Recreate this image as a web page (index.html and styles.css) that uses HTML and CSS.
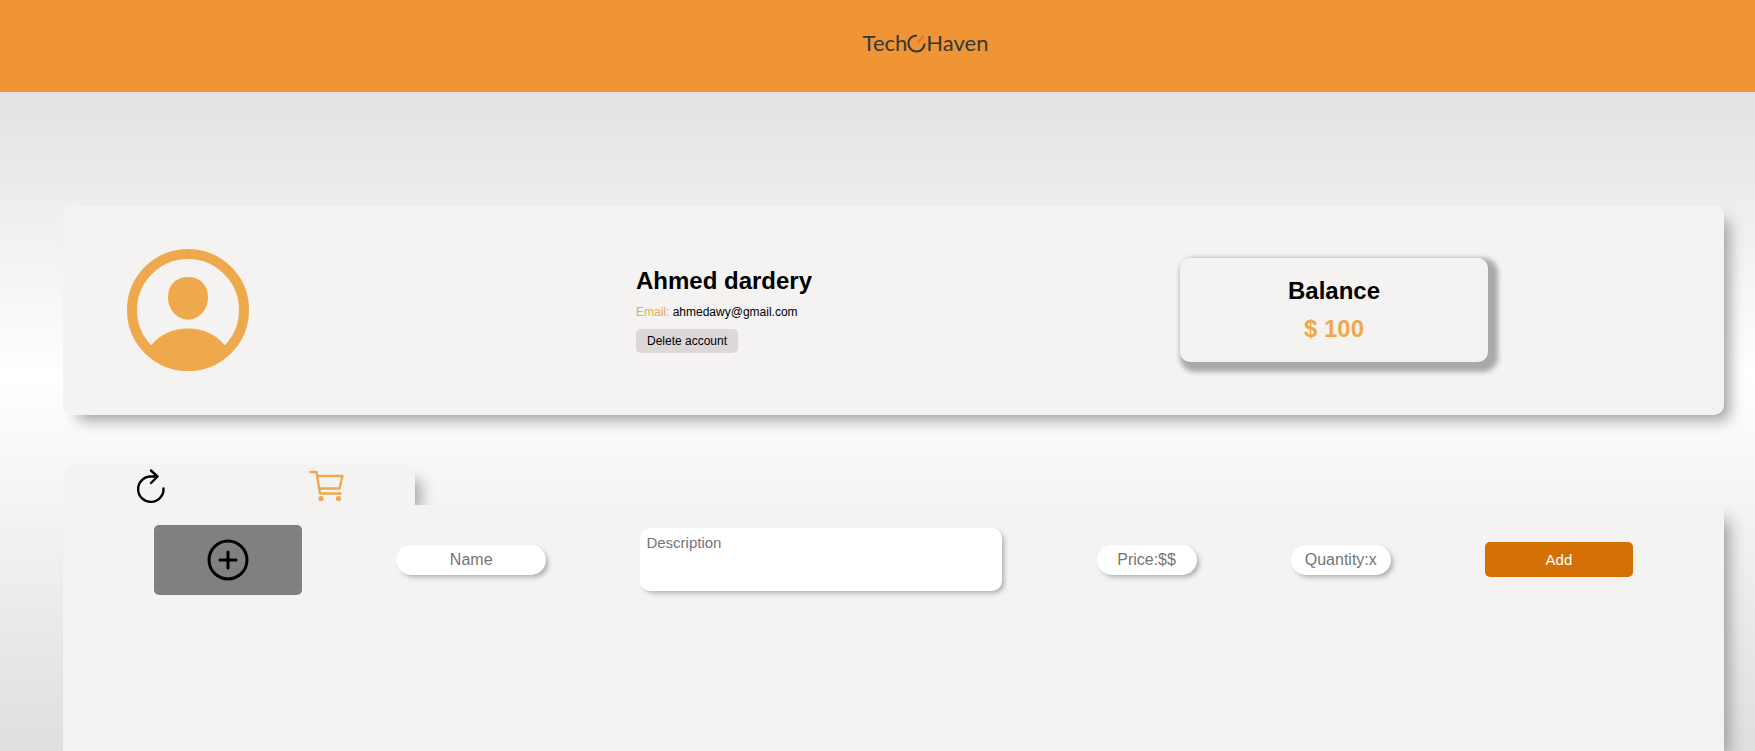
FILE: index.html
```html
<!DOCTYPE html>
<html lang="en">
<head>
<meta charset="utf-8">
<title>TechHaven – Profile</title>
<link rel="stylesheet" href="styles.css">
</head>
<body>
<header class="header">
  <a class="logo" href="#" aria-label="TechHaven">
    <span>Tech</span>
    <svg class="logo-mark" viewBox="0 0 20 20" aria-hidden="true">
      <path d="M10.500 1.500C5 1.500 1.500 5 1.500 10a8.500 8.500 0 0 0 17 0" fill="none" stroke="#353838" stroke-width="2.200"/>
      <path d="M10.500 9.500L18 2" stroke="#f3702f" stroke-width="2.400"/>
    </svg>
    <span>Haven</span>
  </a>
</header>
<main class="page">
  <section class="profile">
    <svg class="avatar" viewBox="0 0 122 122" role="img" aria-label="Avatar">
      <circle cx="61" cy="61" r="56" fill="none" stroke="#eea94d" stroke-width="10"/>
      <path d="M61 28c12 0 20 8 20 20 0 13-9 22.500-20 22.500S41 61 41 48c0-12 8-20 20-20z" fill="#eea94d"/>
      <path d="M24 96.500C33 85 47 79.500 61 79.500S89 85 98 96.500l4 8C91 116 76 122 61 122s-30-6-41-17.500z" fill="#eea94d"/>
    </svg>
    <div class="details">
      <h1 class="name">Ahmed dardery</h1>
      <p class="email"><span class="label">Email:</span> ahmedawy@gmail.com</p>
      <button class="delete" type="button">Delete account</button>
    </div>
    <div class="balance">
      <h2 class="balance-title">Balance</h2>
      <p class="amount">$ 100</p>
    </div>
  </section>
  <section class="store">
    <nav class="tabs">
      <button class="tab" type="button" aria-label="History">
        <svg class="tab-icon" viewBox="0 0 36 36" fill="none" stroke="#000" stroke-width="2.400" stroke-linecap="round" stroke-linejoin="round">
          <path d="M30.500 20.500A12.700 12.700 0 1 1 17.800 8.500H24.500M18 2.500l6.500 6-6.500 6.500"/>
        </svg>
      </button>
      <button class="tab" type="button" aria-label="Cart">
        <svg class="tab-icon" viewBox="0 0 36 36" fill="none" stroke="#eea94d" stroke-width="2.400" stroke-linecap="round" stroke-linejoin="round">
          <path d="M1.500 4H7.500L11 25.500H31.500M8.500 8H33.500L30.500 20.500H10.500"/>
          <circle cx="12" cy="30.500" r="2.600" fill="#eea94d" stroke="none"/>
          <circle cx="29.500" cy="30.500" r="2.600" fill="#eea94d" stroke="none"/>
        </svg>
      </button>
    </nav>
    <form class="panel">
      <button class="upload" type="button" aria-label="Add picture">
        <svg class="upload-icon" viewBox="0 0 42 42" fill="none" stroke="#000" stroke-width="3" stroke-linecap="round">
          <circle cx="21" cy="21" r="19"/>
          <path d="M13 21h16M21 13v16"/>
        </svg>
      </button>
      <input class="field field-name" type="text" placeholder="Name" aria-label="Name">
      <textarea class="description" placeholder="Description" aria-label="Description"></textarea>
      <input class="field" type="text" placeholder="Price:$$" aria-label="Price">
      <input class="field" type="text" placeholder="Quantity:x" aria-label="Quantity">
      <button class="add" type="submit">Add</button>
    </form>
  </section>
</main>
</body>
</html>
```
FILE: styles.css
```css
* { box-sizing: border-box; }

body {
  margin: 0;
  min-height: 100vh;
  display: flex;
  flex-direction: column;
  font-family: "Liberation Sans", Arial, sans-serif;
  color: #000;
  background: linear-gradient(#d9d9d9, #fff 50%, #dfdfdf);
}

h1, h2, p { margin: 0; }

button { border: 0; font: inherit; color: inherit; cursor: pointer; }

.header {
  display: flex;
  justify-content: center;
  padding: 29px 0 35px 96px;
  background: #ef9535;
}

.logo {
  display: flex;
  align-items: center;
  height: 28px;
  font: 22px/28px Lato, sans-serif;
  color: #353838;
  text-decoration: none;
}

.logo-mark { width: 19px; height: 19px; }

.page {
  flex: 1;
  display: flex;
  flex-direction: column;
  gap: 50px;
  padding: 113px 31px 0 63px;
}

.profile {
  display: grid;
  grid-template-columns: 509fr 544fr 544fr;
  align-items: center;
  min-height: 210px;
  padding-left: 64px;
  border-radius: 10px;
  background: #f4f3f1;
  box-shadow: 10px 10px 15px -5px #9c9c9c;
}

.avatar { width: 122px; height: 122px; }

.details {
  display: flex;
  flex-direction: column;
  align-items: flex-start;
  gap: 9px;
}

.name { font-size: 24px; line-height: 28px; }

.email { font-size: 12px; line-height: 16px; }

.label, .amount { color: #eea94d; }

.delete {
  height: 24px;
  padding: 0 11px;
  border-radius: 5px;
  font-size: 12px;
  background: #ddd7d7;
}

.balance {
  width: 308px;
  padding: 19px 0;
  border-radius: 10px;
  text-align: center;
  font-weight: bold;
  font-size: 24px;
  line-height: 28px;
  background: #f4f3f1;
  box-shadow: 5px 5px 5px 5px #aaa8a8;
}

.balance-title { margin-bottom: 10px; font-size: 24px; }

.store { flex: 1; display: flex; flex-direction: column; }

.tabs {
  display: flex;
  justify-content: space-around;
  width: 352px;
  height: 40px;
  border-radius: 10px 10px 0 0;
  background: #f4f3f1;
  box-shadow: 10px 10px 15px -5px #9c9c9c;
}

.tab { padding: 1px 0 0; background: none; }

.tab-icon { display: block; width: 36px; height: 36px; }

.panel {
  position: relative;
  flex: 1;
  display: flex;
  justify-content: space-between;
  align-items: flex-start;
  padding: 20px 91px;
  background: #f4f3f1;
  box-shadow: 10px 10px 15px -5px #9c9c9c;
}

.upload {
  display: grid;
  place-items: center;
  width: 148px;
  height: 70px;
  border-radius: 5px;
  background: #808080;
}

.upload-icon { width: 42px; height: 42px; }

.field {
  width: 100px;
  height: 30px;
  margin-top: 20px;
  padding: 0;
  border: 0;
  border-radius: 15px;
  font: 16px "Liberation Sans", Arial, sans-serif;
  text-align: center;
  background: #fff;
  box-shadow: 3px 3px 5px -1px #aaa;
}

.field-name { width: 150px; }

.description {
  width: 362px;
  height: 63px;
  margin-top: 3px;
  padding: 6px;
  border: 0;
  border-radius: 10px;
  resize: none;
  font: 15px "Liberation Sans", Arial, sans-serif;
  box-shadow: 3px 3px 5px -1px #aaa;
}

.field::placeholder, .description::placeholder { color: #757575; }

.add {
  width: 148px;
  height: 35px;
  margin-top: 17px;
  border-radius: 5px;
  font-size: 15px;
  color: #fff;
  background: #d57006;
}
```
